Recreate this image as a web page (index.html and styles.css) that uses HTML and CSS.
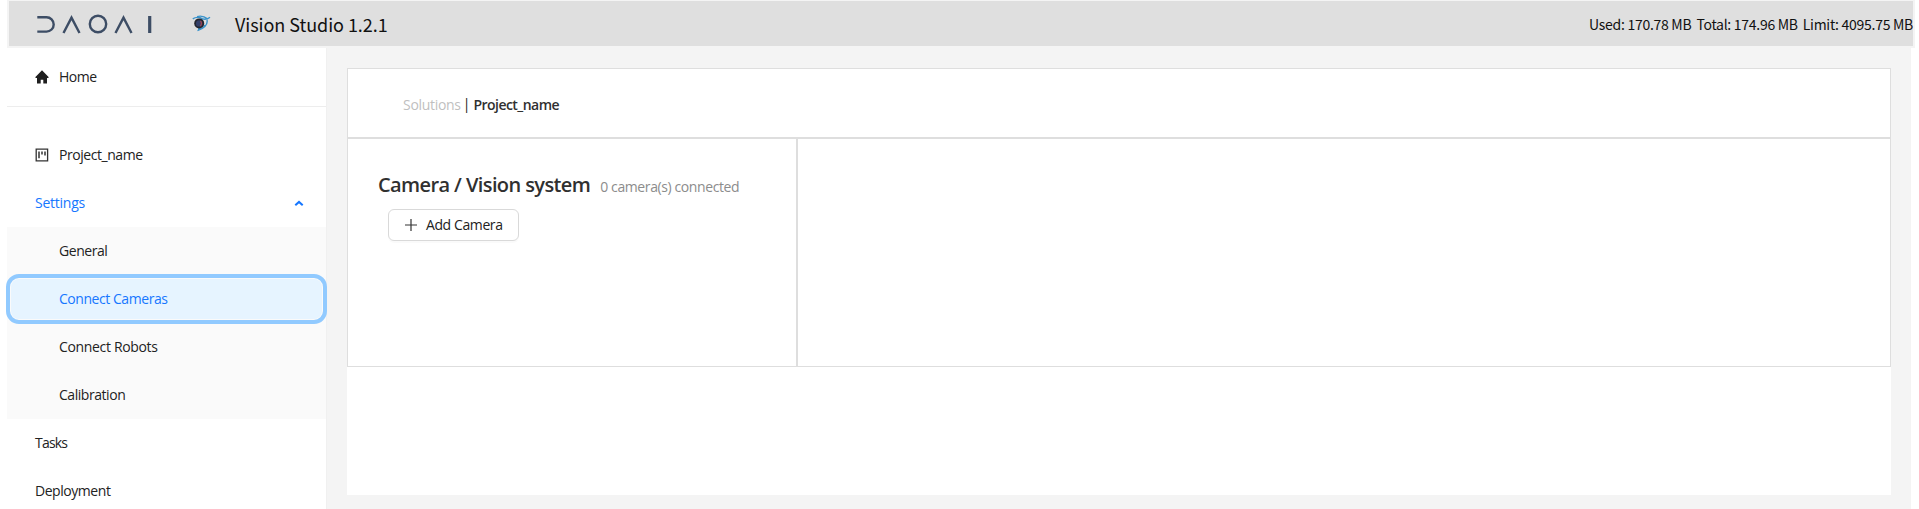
FILE: index.html
```html
<!DOCTYPE html>
<html lang="en">
<head>
<meta charset="utf-8">
<title>Vision Studio</title>
<link rel="stylesheet" href="styles.css">
</head>
<body>
<header class="topbar">
  <svg class="logo" width="116" height="20" viewBox="0 0 116 20" fill="none" stroke="#3d4d65" stroke-width="2.4">
    <path d="M0.3 3.2H9.5A7.2 7.2 0 0 1 9.5 17.6H0.3"/>
    <path d="M26.5 19L34.5 3.6L42.5 19"/>
    <circle cx="61" cy="10" r="8.2"/>
    <path d="M78.5 19L86.5 3.6L94.5 19"/>
    <path d="M112.7 2V19" stroke-width="3.2"/>
  </svg>
  <svg class="eye" width="19" height="17" viewBox="0 0 19 17" fill="none">
    <path d="M.8 3.9C3 2.2 5 2 8 2.6C11 4.6 15 4.6 18 2.2M5 1.6C9 .4 13 1.8 15.5 3.8M15 5C16 10 12 13.5 5.5 15.6M6 13.8C10 14 12 12.5 13 10" stroke="#3a93cb" stroke-width="1.4"/>
    <circle cx="7.2" cy="8.4" r="5" fill="#24262f"/>
    <circle cx="7.2" cy="8.4" r="3.2" fill="#34406a"/>
    <path d="M8.4 6C10 7.4 9.8 9.6 8.2 11" stroke="#a04450" stroke-width="1.3"/>
  </svg>
  <h1 class="title">Vision Studio 1.2.1</h1>
  <div class="memory"><span>Used: 170.78 MB</span><span>Total: 174.96 MB</span><span>Limit: 4095.75 MB</span></div>
</header>
<div class="layout">
  <nav class="sidebar">
    <div class="home-row">
      <a class="item"><svg class="icon" width="14" height="14" viewBox="0 0 14 14"><path d="M7 .3L.2 7.2L.9 8H2V13.4H5.7V9.8H8.3V13.4H12V8H13.1L13.8 7.2Z" fill="#1f1f1f"/></svg><span>Home</span></a>
    </div>
    <div class="menu">
      <a class="item"><svg class="icon" width="14" height="14" viewBox="0 0 14 14"><path d="M1.2 1.2H12.6V12.8H1.2Z" fill="none" stroke="#333" stroke-width="1.3"/><path d="M4 3.4V10.2M7 3.4V6.6M10 3.4V7.5" stroke="#333" stroke-width="1.5"/></svg><span>Project_name</span></a>
      <a class="item open"><span>Settings</span><svg class="chevron" width="10" height="7" viewBox="0 0 10 7"><path d="M1.3 5.3L5 1.9L8.7 5.3" fill="none" stroke="#1677ff" stroke-width="2"/></svg></a>
      <div class="submenu">
        <a class="item sub"><span>General</span></a>
        <a class="item sub selected"><span>Connect Cameras</span></a>
        <a class="item sub robots"><span>Connect Robots</span></a>
        <a class="item sub"><span>Calibration</span></a>
      </div>
      <a class="item tasks"><span>Tasks</span></a>
      <a class="item"><span>Deployment</span></a>
    </div>
  </nav>
  <main class="content">
    <section class="card">
      <div class="crumbs"><span class="muted">Solutions</span><span class="bar">|</span><span class="current">Project_name</span></div>
      <div class="panels">
        <div class="panel-left">
          <div class="heading"><h2>Camera / Vision system</h2><span class="count">0 camera(s) connected</span></div>
          <button class="add"><svg width="14" height="14" viewBox="0 0 14 14"><path d="M7 1V13M1 7H13" stroke="#333" stroke-width="1.2"/></svg><span>Add Camera</span></button>
        </div>
        <div class="panel-right"></div>
      </div>
    </section>
  </main>
</div>
</body>
</html>
```
FILE: styles.css
```css
* { box-sizing: border-box; }
body { margin: 0; height: 509px; overflow: hidden; background: #fff; padding: 0 4px 0 7px; font: 14px/20px "Open Sans", "Noto Sans", sans-serif; color: #222; }
span, h1, h2 { white-space: nowrap; }
.topbar { height: 48px; background: #dfdfdf; border: 2px solid #f4f4f4; border-top-width: 1px; display: flex; align-items: center; font-family: "Noto Sans CJK SC", sans-serif; color: #111; }
.logo { margin: 0 0 0 28px; }
.eye { margin: -1px 0 0 39px; }
.title { margin: 1px 0 0 24px; font-size: 18px; line-height: 28px; font-weight: 400; letter-spacing: -.05px; }
.memory { margin: 1px 0 0 auto; display: flex; gap: 5px; font-size: 14px; letter-spacing: -.28px; }
.layout { display: flex; height: 461px; }
.sidebar { width: 320px; flex: none; border-right: 1px solid #f0f0f0; letter-spacing: -.45px; }
.home-row { height: 59px; border-bottom: 1px solid #ededed; padding-top: 5px; }
.menu { padding-top: 24px; }
.item { height: 48px; display: flex; align-items: center; padding-left: 28px; }
.icon { margin-right: 10px; flex: none; }
.open { color: #1677ff; letter-spacing: -.25px; }
.robots { letter-spacing: -.34px; }
.tasks { letter-spacing: -.8px; }
.chevron { margin: 0 22px 0 auto; }
.submenu { background: #fafafa; }
.sub { padding-left: 52px; }
.selected { height: 40px; margin: 4px; padding-left: 48px; background: #e6f4ff; color: #1677ff; border-radius: 8px; outline: 4px solid #91caff; outline-offset: 1px; }
.content { flex: 1; background: #f4f4f4; padding: 20px 20px 14px; margin-right: 4px; }
.card { height: 427px; background: #fff; }
.crumbs { height: 70px; border: 1px solid #dedede; display: flex; align-items: center; padding: 4px 0 0 55px; }
.muted { color: #bfbfbf; letter-spacing: -.3px; }
.bar { margin: -3px 3px 0 2px; }
.current { font-weight: 600; color: #303030; letter-spacing: -.54px; }
.panels { display: flex; height: 229px; }
.panel-left { width: 450px; border: 1px solid #dedede; padding: 32px 0 0 30px; }
.panel-right { flex: 1; border: 1px solid #dedede; }
.heading { display: flex; align-items: baseline; height: 36px; }
h2 { margin: 0; font-size: 20px; line-height: 28px; font-weight: 600; color: #303030; letter-spacing: -.6px; }
.count { margin-left: 10px; color: #8c8c8c; letter-spacing: -.4px; }
.add { width: 131px; height: 32px; margin: 2px 0 0 10px; padding: 0 0 0 15px; display: flex; align-items: center; gap: 8px; border: 1px solid #d9d9d9; border-radius: 6px; background: #fff; box-shadow: 0 2px 0 rgba(0,0,0,.02); font: inherit; color: #222; letter-spacing: -.4px; }
```
